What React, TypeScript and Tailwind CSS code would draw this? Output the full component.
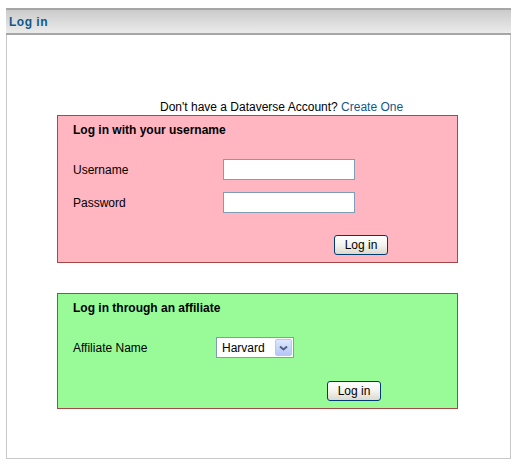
import { useState } from "react";

function XpButton({ children }: { children: React.ReactNode }) {
  return (
    <button
      type="button"
      className="h-[20px] w-[54px] rounded-[3px] border border-[#003c74] bg-gradient-to-b from-[#ffffff] via-[#f4f3ee] to-[#dcd9cc] text-[12px] leading-none text-black"
    >
      {children}
    </button>
  );
}

function TextInput({ type = "text" }: { type?: string }) {
  return (
    <input
      type={type}
      className="h-[21px] w-[132px] border border-[#7f9db9] bg-white px-1 text-[12px] outline-none"
    />
  );
}

export default function App() {
  const [affiliate, setAffiliate] = useState("Harvard");

  return (
    <div className="h-[468px] w-[517px] bg-white pt-2 font-['Liberation_Sans',Arial,sans-serif] text-[12px] text-black">
      <div className="mx-[6px] h-[451px] border-x border-b border-[#c8c8c8]">
        {/* header bar */}
        <div className="-mx-px flex h-[27px] items-center border-y-2 border-[#a6a6a6] bg-gradient-to-b from-[#cbcbcb] to-[#ebebeb] px-[3px]">
          <span className="text-[12px] font-bold tracking-[0.5px] text-[#10588c]">Log in</span>
        </div>

        <div className="pl-[50px] pt-[64px]">
          <p className="ml-[103px] h-[16px] leading-[16px]">
            Don't have a Dataverse Account?{" "}
            <a href="#" className="text-[#10588c]">
              Create One
            </a>
          </p>

          {/* username login */}
          <div className="h-[148px] w-[401px] border border-[#a54848] bg-[#ffb6c1] px-[15px] pt-[7px]">
            <h2 className="font-bold leading-[15px]">Log in with your username</h2>
            <div className="mt-[21px] flex h-[21px] items-center">
              <label className="w-[150px]">Username</label>
              <TextInput />
            </div>
            <div className="mt-[12px] flex h-[21px] items-center">
              <label className="w-[150px]">Password</label>
              <TextInput type="password" />
            </div>
            <div className="mt-[22px] flex pl-[261px]">
              <XpButton>Log in</XpButton>
            </div>
          </div>

          {/* affiliate login */}
          <div className="mt-[30px] h-[116px] w-[401px] border border-[#a54848] bg-[#98fb98] px-[15px] pt-[7px]">
            <h2 className="font-bold leading-[15px]">Log in through an affiliate</h2>
            <div className="mt-[21px] flex h-[21px] items-center">
              <label className="w-[143px]">Affiliate Name</label>
              <div className="relative flex h-[21px] w-[78px] items-center border border-[#7f9db9] bg-white">
                <select
                  value={affiliate}
                  onChange={(e) => setAffiliate(e.target.value)}
                  className="absolute inset-0 cursor-pointer opacity-0"
                >
                  <option>Harvard</option>
                </select>
                <span className="pl-[5px] text-[12px]">{affiliate}</span>
                <span className="ml-auto mr-px flex h-[17px] w-[17px] items-center justify-center rounded-[2px] border border-[#b9c8f3] bg-gradient-to-b from-[#dfe7fd] to-[#b3c6f7]">
                  <svg width="9" height="6" viewBox="0 0 9 6">
                    <path d="M1 1.5 L4.5 4.5 L8 1.5" fill="none" stroke="#4d6185" strokeWidth="2" />
                  </svg>
                </span>
              </div>
            </div>
            <div className="mt-[23px] flex pl-[254px]">
              <XpButton>Log in</XpButton>
            </div>
          </div>
        </div>
      </div>
    </div>
  );
}
